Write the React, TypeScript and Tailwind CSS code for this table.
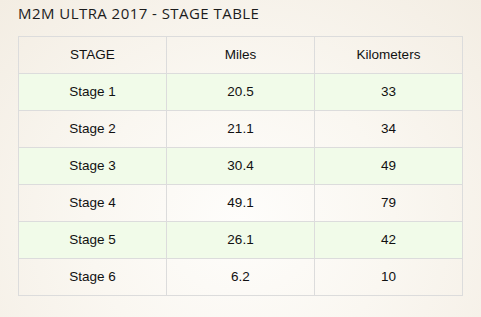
import React from "react";

const rows = [
  ["Stage 1", "20.5", "33"],
  ["Stage 2", "21.1", "34"],
  ["Stage 3", "30.4", "49"],
  ["Stage 4", "49.1", "79"],
  ["Stage 5", "26.1", "42"],
  ["Stage 6", "6.2", "10"],
];

export default function App() {
  return (
    <div className="w-[481px] h-[317px] overflow-hidden bg-[radial-gradient(ellipse_at_50%_70%,#fefdfb_0%,#faf7f1_45%,#f3ede3_100%)] px-[18px] pt-[3px]">
      <h1 className="text-[15px] leading-[20px] tracking-[0.45px] text-[#1c1c1c] font-['Open_Sans',sans-serif] mb-[13px]">
        M2M ULTRA 2017 - STAGE TABLE
      </h1>
      <table className="w-[445px] border-collapse font-['Liberation_Sans',Arial,sans-serif] text-[13.5px] text-[#111] table-fixed">
        <thead>
          <tr className="h-[37px]">
            <th className="border border-[#dcdcdc] font-normal w-1/3">STAGE</th>
            <th className="border border-[#dcdcdc] font-normal w-1/3">Miles</th>
            <th className="border border-[#dcdcdc] font-normal w-1/3">Kilometers</th>
          </tr>
        </thead>
        <tbody>
          {rows.map((r, i) => (
            <tr key={i} className={`h-[37px] ${i % 2 === 0 ? "bg-[#f1fbe9]" : ""}`}>
              {r.map((c, j) => (
                <td key={j} className="border border-[#dcdcdc] text-center">
                  {c}
                </td>
              ))}
            </tr>
          ))}
        </tbody>
      </table>
    </div>
  );
}
